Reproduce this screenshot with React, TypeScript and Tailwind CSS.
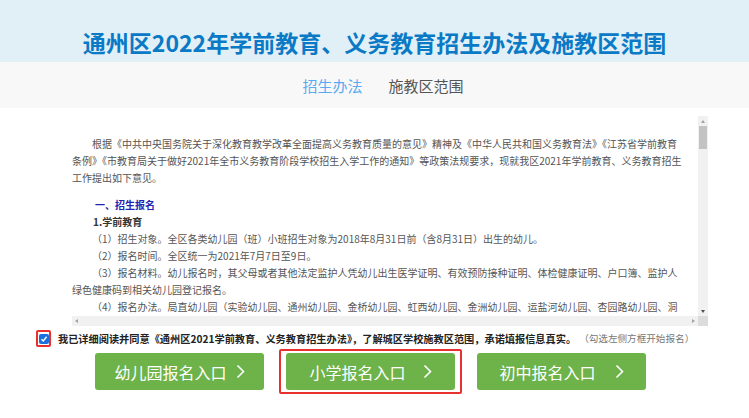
import React from "react";

const font = {
  fontFamily: '"Noto Sans CJK SC", "Noto Sans", sans-serif',
};

const Chevron = () => (
  <svg width="9" height="15" viewBox="0 0 9 15" fill="none">
    <polyline points="1.5,1.5 7.5,7.5 1.5,13.5" stroke="white" strokeWidth="1.6" />
  </svg>
);

const EnrollButton = ({ label, gap, selected }: { label: string; gap: string; selected?: boolean }) => (
  <div className="relative">
    <button
      className={`flex h-[37px] w-[169px] items-center justify-center rounded-[3px] bg-[#6db34a] text-[16px] text-white ${gap}`}
    >
      <span>{label}</span>
      <Chevron />
    </button>
    {selected && (
      <span className="pointer-events-none absolute -inset-x-[7px] -inset-y-[4px] rounded-[2px] border-2 border-[#e8312f]" />
    )}
  </div>
);

export default function App() {
  return (
    <div className="h-[418px] w-full overflow-hidden bg-white" style={font}>
      <div className="h-[62px] bg-[#e1eff7] pt-[28px] text-center text-[23px] font-bold leading-[28px] text-[#0a7ac6]">
        通州区2022年学前教育、义务教育招生办法及施教区范围
      </div>

      <div className="flex h-[46px] items-center justify-center gap-[26px] bg-[#f8f8f8] pl-[17px] pt-[3px] text-[15px]">
        <span className="text-[#5aaaf0]">招生办法</span>
        <span className="text-[#555]">施教区范围</span>
      </div>

      <div className="ml-[72px] mt-[8px] flex h-[210px] w-[636px] flex-col">
        <div className="flex min-h-0 flex-1">
          <div className="flex-1 overflow-hidden pt-[19px] text-[10px] leading-[17px] text-[#555] whitespace-nowrap">
            <p className="indent-[20px]">
              根据《中共中央国务院关于深化教育教学改革全面提高义务教育质量的意见》精神及《中华人民共和国义务教育法》《江苏省学前教育
            </p>
            <p>条例》《市教育局关于做好2021年全市义务教育阶段学校招生入学工作的通知》等政策法规要求，现就我区2021年学前教育、义务教育招生</p>
            <p>工作提出如下意见。</p>
            <p className="mt-[10px] pl-[23px] font-bold text-[#2323b4]">一、招生报名</p>
            <p className="pl-[21px] font-bold text-[#333]">1.学前教育</p>
            <p className="pl-[20px]">（1）招生对象。全区各类幼儿园（班）小班招生对象为2018年8月31日前（含8月31日）出生的幼儿。</p>
            <p className="pl-[20px]">（2）报名时间。全区统一为2021年7月7日至9日。</p>
            <p className="pl-[20px]">
              （3）报名材料。幼儿报名时，其父母或者其他法定监护人凭幼儿出生医学证明、有效预防接种证明、体检健康证明、户口簿、监护人
            </p>
            <p>绿色健康码到相关幼儿园登记报名。</p>
            <p className="pl-[20px]">
              （4）报名办法。局直幼儿园（实验幼儿园、通州幼儿园、金桥幼儿园、虹西幼儿园、金洲幼儿园、运盐河幼儿园、杏园路幼儿园、洞
            </p>
          </div>
          <div className="flex w-[10px] flex-col bg-[#f1f1f1]">
            <div className="flex h-[10px] items-center justify-center">
              <span className="h-0 w-0 border-x-[2.5px] border-b-[3px] border-x-transparent border-b-[#a3a3a3]" />
            </div>
            <div className="mx-[1px] h-[23px] bg-[#c3c3c3]" />
            <div className="flex-1" />
            <div className="flex h-[10px] items-center justify-center">
              <span className="h-0 w-0 border-x-[2.5px] border-t-[3px] border-x-transparent border-t-[#505050]" />
            </div>
          </div>
        </div>
        <div className="flex h-[10px]">
          <div className="flex flex-1 items-center justify-between bg-[#f1f1f1] px-[3px]">
            <span className="h-0 w-0 border-y-[2.5px] border-r-[3px] border-y-transparent border-r-[#a3a3a3]" />
            <span className="h-0 w-0 border-y-[2.5px] border-l-[3px] border-y-transparent border-l-[#a3a3a3]" />
          </div>
          <div className="w-[10px] bg-[#dcdcdc]" />
        </div>
      </div>

      <div className="ml-[36px] mt-[4px] flex items-center gap-[7px] leading-[17px]">
        <span className="flex h-[17px] w-[15px] items-center justify-center rounded-[2px] border-2 border-[#e8312f]">
          <span className="flex h-[10px] w-[10px] items-center justify-center rounded-[2px] bg-[#1b6fe0]">
            <svg width="8" height="8" viewBox="0 0 8 8" fill="none">
              <polyline points="1.5,4.2 3.3,6 6.6,1.8" stroke="white" strokeWidth="1.4" />
            </svg>
          </span>
        </span>
        <span className="text-[10.2px] font-bold text-[#222]">
          我已详细阅读并同意《通州区2021学前教育、义务教育招生办法》，了解城区学校施教区范围，承诺填报信息真实。
        </span>
        <span className="-ml-[4px] text-[9.6px] text-[#777]">（勾选左侧方框开始报名）</span>
      </div>

      <div className="mt-[6px] flex justify-center gap-[22px] pr-[8px]">
        <EnrollButton label="幼儿园报名入口" gap="gap-[9px]" />
        <EnrollButton label="小学报名入口" gap="gap-[17px]" selected />
        <EnrollButton label="初中报名入口" gap="gap-[19px]" />
      </div>
    </div>
  );
}
